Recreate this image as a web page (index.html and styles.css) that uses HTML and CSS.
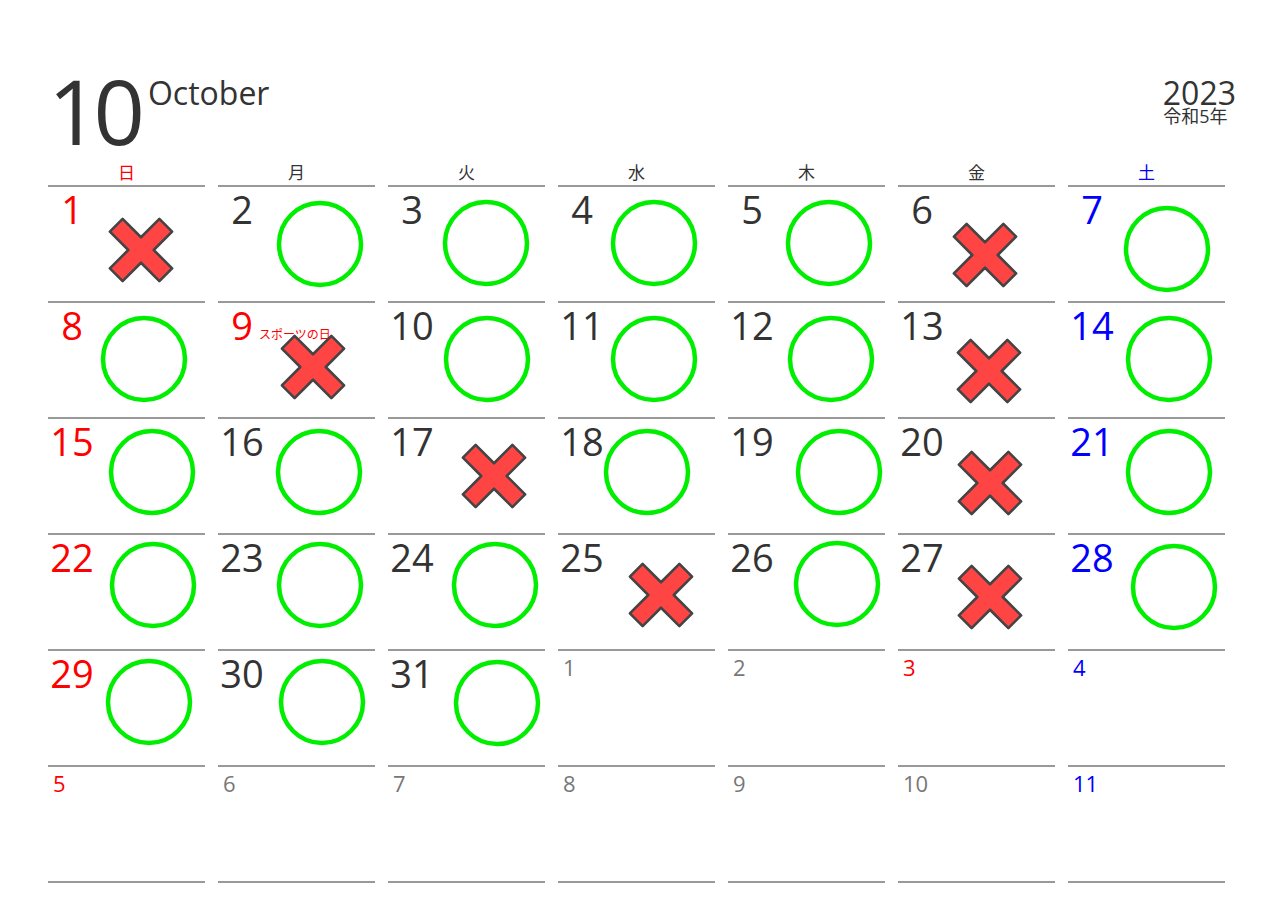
FILE: index.html
```html
<!DOCTYPE html>
<html lang="ja">
<head>
<meta charset="UTF-8">
<meta name="viewport" content="width=device-width, initial-scale=1.0">
<title>2023年10月 カレンダー</title>
<link rel="stylesheet" href="styles.css">
</head>
<body>
<div class="page">
    <div class="top">
        <div class="month">
            <span class="month-num">10</span>
            <span class="month-name">October</span>
        </div>
        <div class="year">
            <div class="year-num">2023</div>
            <div class="era">令和5年</div>
        </div>
    </div>
    <div class="weekdays">
        <div class="dow sun">日</div>
        <div class="dow">月</div>
        <div class="dow">火</div>
        <div class="dow">水</div>
        <div class="dow">木</div>
        <div class="dow">金</div>
        <div class="dow sat">土</div>
    </div>
    <div class="days" id="days"></div>
</div>

<script>
    // [type, center x, center y] measured from the cell's top line
    const marks = {
        1: ['x', 93, 65], 2: ['o', 102, 59], 3: ['o', 98, 58], 4: ['o', 96, 58],
        5: ['o', 101, 58], 6: ['x', 87, 70], 7: ['o', 99, 64],
        8: ['o', 96, 58], 9: ['x', 95, 66], 10: ['o', 99, 58], 11: ['o', 96, 58],
        12: ['o', 103, 58], 13: ['x', 91, 70], 14: ['o', 101, 58],
        15: ['o', 104, 55], 16: ['o', 101, 55], 17: ['x', 106, 59], 18: ['o', 89, 55],
        19: ['o', 111, 55], 20: ['x', 92, 66], 21: ['o', 101, 55],
        22: ['o', 105, 52], 23: ['o', 102, 52], 24: ['o', 107, 52], 25: ['x', 103, 62],
        26: ['o', 109, 51], 27: ['x', 92, 64], 28: ['o', 106, 54],
        29: ['o', 101, 53], 30: ['o', 104, 53], 31: ['o', 109, 54]
    };
    const holidays = { 9: 'スポーツの日' };
    const nextHolidays = [3];

    const circleSvg = `<svg width="90" height="90" viewBox="0 0 90 90"><circle cx="45" cy="45" r="41" fill="none" stroke="#00ee00" stroke-width="4.5"/></svg>`;
    const crossSvg = `<svg width="72" height="72" viewBox="-36 -36 72 72"><path transform="rotate(45)" d="M-9 -35H9V-9H35V9H9V35H-9V9H-35V-9H-9Z" fill="#ff4444" stroke="#444" stroke-width="2.6" stroke-linejoin="round"/></svg>`;

    const days = document.getElementById('days');

    for (let i = 0; i < 42; i++) {
        const cell = document.createElement('div');
        const col = i % 7;
        cell.className = 'day';
        let day, cls = '';
        if (i < 31) {
            day = i + 1;
            if (col === 0 || holidays[day]) cls = 'sun';
            else if (col === 6) cls = 'sat';
        } else {
            day = i - 30;
            cell.classList.add('next');
            if (col === 0 || nextHolidays.includes(day)) cls = 'sun';
            else if (col === 6) cls = 'sat';
        }

        let html = `<div class="head"><div class="num ${cls}">${day}</div>`;
        if (i < 31 && holidays[day]) html += `<div class="holiday">${holidays[day]}</div>`;
        html += '</div>';

        if (i < 31 && marks[day]) {
            const [type, cx, cy] = marks[day];
            const size = type === 'o' ? 90 : 72;
            html += `<div class="mark" style="left:${cx - size / 2}px;top:${cy - 2 - size / 2}px">${type === 'o' ? circleSvg : crossSvg}</div>`;
        }
        cell.innerHTML = html;
        days.appendChild(cell);
    }
</script>
</body>
</html>
```

FILE: styles.css
```css
body {
    margin: 0;
    background: #fff;
    color: #333;
    font-family: "Open Sans", "Noto Sans CJK JP", sans-serif;
}
.page {
    width: 1177px;
    margin-left: 48px;
}
.top {
    height: 158px;
    box-sizing: border-box;
    padding-top: 68px;
    margin-right: -11px;
    display: flex;
    justify-content: space-between;
    align-items: flex-start;
}
.month {
    display: flex;
    align-items: flex-start;
}
.month-num {
    font-size: 90px;
    line-height: 0.95;
    letter-spacing: -6px;
}
.month-name {
    font-size: 32px;
    line-height: 1;
    margin: 9px 0 0 9px;
}
.year {
    display: flex;
    flex-direction: column;
    align-items: center;
    margin-top: 10px;
}
.year-num {
    font-size: 32px;
    line-height: 30px;
}
.era {
    font-size: 18px;
    line-height: 18px;
    margin: -1px 8px 0 0;
}
.weekdays, .days {
    display: grid;
    grid-template-columns: repeat(7, 157px);
    column-gap: 13px;
}
.dow {
    height: 29px;
    box-sizing: border-box;
    padding-top: 4px;
    border-bottom: 2px solid #999;
    text-align: center;
    font-size: 17px;
    line-height: 22px;
}
.day {
    position: relative;
    height: 116px;
    box-sizing: border-box;
    border-bottom: 2px solid #999;
}
.head {
    display: flex;
    align-items: flex-start;
}
.num {
    width: 48px;
    padding-top: 3px;
    text-align: center;
    font-size: 38px;
    line-height: 1;
}
.holiday {
    margin: 26px 0 0 -7px;
    font-size: 12px;
    line-height: 1;
    color: #f00;
    white-space: nowrap;
}
.next .num {
    width: auto;
    padding: 5px 0 0 5px;
    text-align: left;
    font-size: 22px;
    color: #777;
}
.sun, .next .num.sun { color: #f00; }
.sat, .next .num.sat { color: #00f; }
.mark {
    position: absolute;
    line-height: 0;
}
```
